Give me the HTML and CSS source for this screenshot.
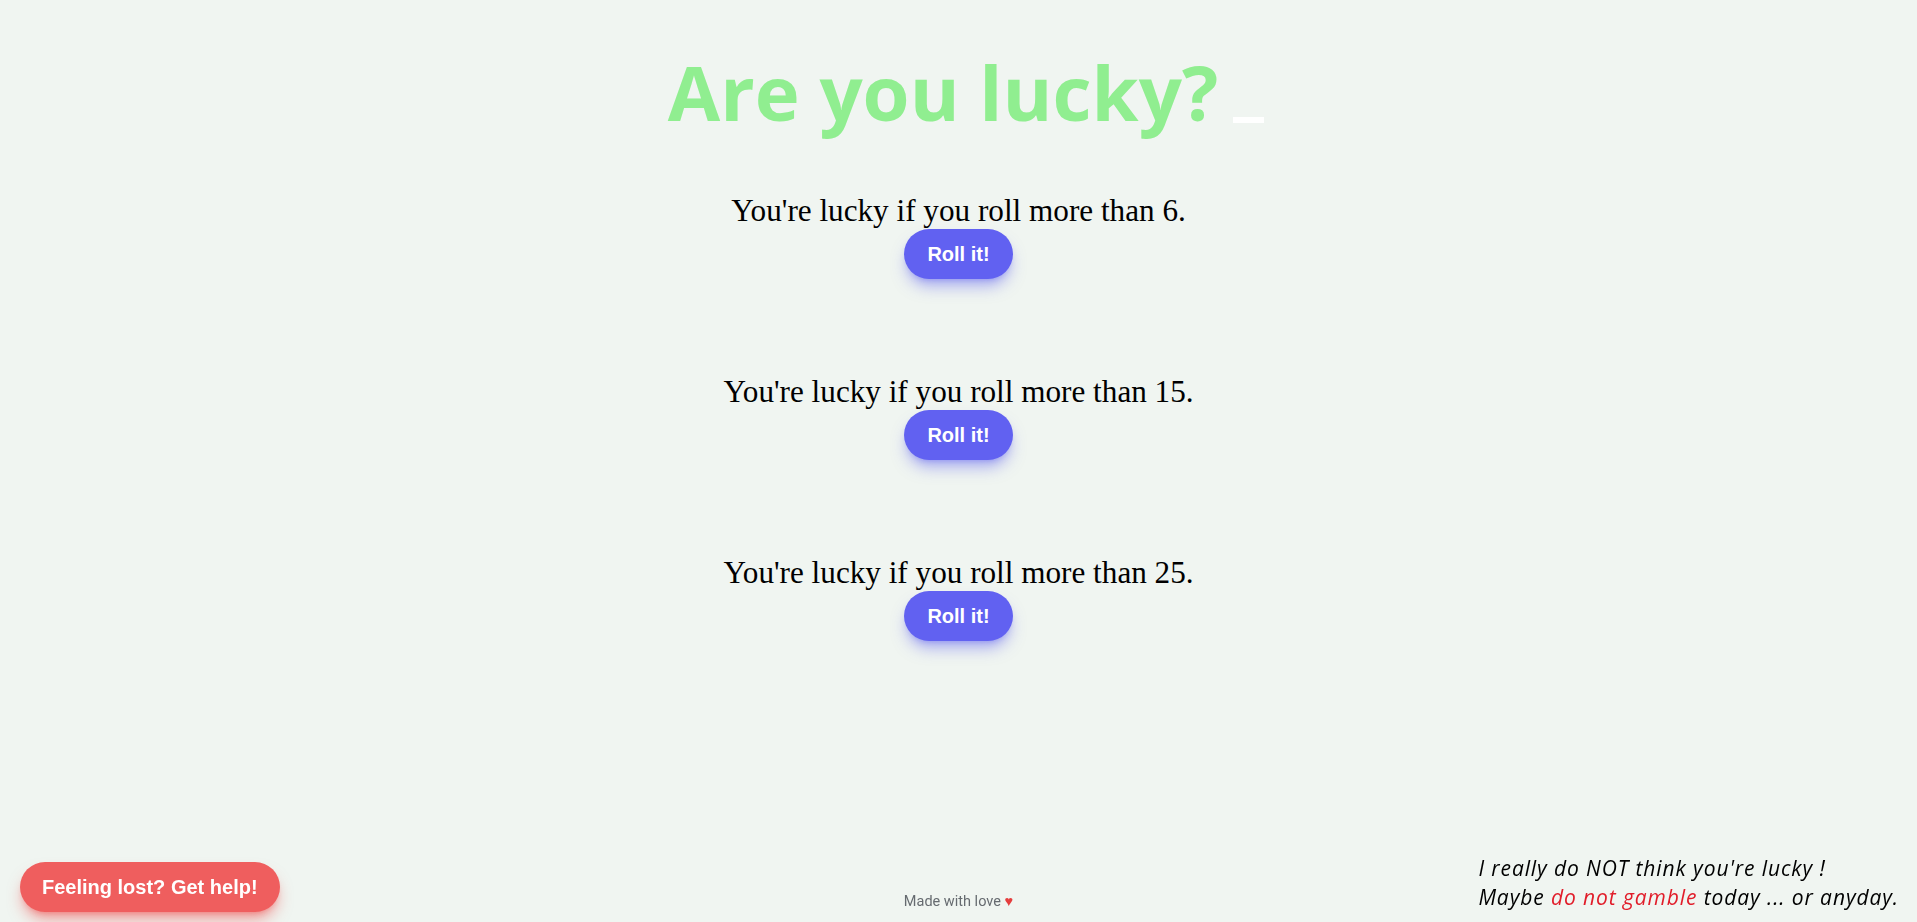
FILE: index.html
```html
<!DOCTYPE html>
<html lang="en">
<head>
<meta charset="utf-8">
<title>Are you lucky?</title>
<link rel="stylesheet" href="styles.css">
</head>
<body>
<main class="page">
  <h1 class="title">Are you lucky?<span class="cursor"></span></h1>
  <section class="game">
    <p class="game-text">You're lucky if you roll more than 6.</p>
    <button class="roll-btn">Roll it!</button>
  </section>
  <section class="game">
    <p class="game-text">You're lucky if you roll more than 15.</p>
    <button class="roll-btn">Roll it!</button>
  </section>
  <section class="game">
    <p class="game-text">You're lucky if you roll more than 25.</p>
    <button class="roll-btn">Roll it!</button>
  </section>
</main>
<footer class="footer">Made with love <span class="heart">&#9829;</span></footer>
<button class="help-btn">Feeling lost? Get help!</button>
<div class="warning">
  <div>I really do NOT think you're lucky !</div>
  <div>Maybe <span class="danger">do not gamble</span> today ... or anyday.</div>
</div>
</body>
</html>
```

FILE: styles.css
```css
html, body {
  margin: 0;
  padding: 0;
}
body {
  background: #f0f5f1;
  min-height: 922px;
  font-family: "Liberation Serif", "Times New Roman", serif;
}
.page {
  display: flex;
  flex-direction: column;
  align-items: center;
}
.title {
  margin: 40px 0 49px;
  padding-left: 15px;
  font-family: "Open Sans", sans-serif;
  font-weight: 700;
  font-size: 76px;
  line-height: 104px;
  color: #90ee90;
}
.cursor {
  display: inline-block;
  width: 31px;
  height: 6px;
  margin-left: 15px;
  background: #ffffff;
  vertical-align: -2px;
}
.game {
  display: flex;
  flex-direction: column;
  align-items: center;
  margin-bottom: 95px;
}
.game-text {
  margin: 0;
  font-size: 31.2px;
  line-height: 36px;
  color: #000;
}
.roll-btn {
  border: none;
  border-radius: 9999px;
  background: #6161f1;
  color: #fff;
  font-family: "Liberation Sans", Arial, sans-serif;
  font-weight: 700;
  font-size: 20px;
  line-height: 28px;
  padding: 11px 23px;
  box-shadow: 0 10px 15px -3px rgba(99, 102, 241, 0.5), 0 4px 6px -4px rgba(99, 102, 241, 0.5);
  cursor: pointer;
}
.footer {
  position: fixed;
  left: 0;
  right: 0;
  bottom: 10px;
  text-align: center;
  font-family: Roboto, "Liberation Sans", sans-serif;
  font-size: 14.5px;
  line-height: 20px;
  color: #666b70;
}
.heart {
  color: #e53e3e;
}
.help-btn {
  position: fixed;
  left: 20px;
  bottom: 10px;
  border: none;
  border-radius: 9999px;
  background: #ef5e5e;
  color: #fff;
  font-family: "Liberation Sans", Arial, sans-serif;
  font-weight: 700;
  font-size: 20px;
  line-height: 28px;
  padding: 11px 22px;
  box-shadow: 0 10px 15px -3px rgba(239, 68, 68, 0.5), 0 4px 6px -4px rgba(239, 68, 68, 0.5);
  cursor: pointer;
}
.warning {
  position: fixed;
  right: 18px;
  bottom: 10px;
  font-family: "Open Sans", sans-serif;
  font-style: italic;
  font-size: 21px;
  letter-spacing: 0.9px;
  line-height: 29px;
  color: #000;
}
.danger {
  color: #e11d2a;
}
```
